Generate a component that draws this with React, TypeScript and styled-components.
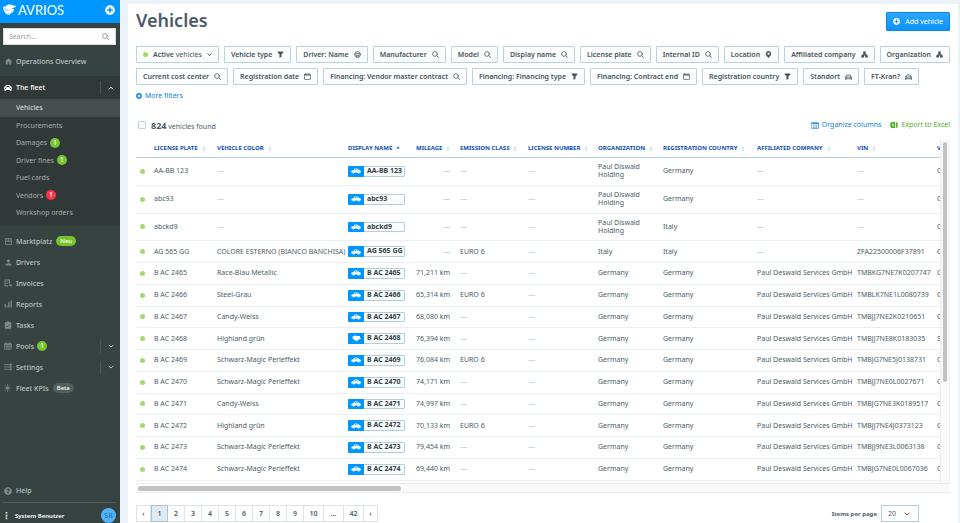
import React from 'react';
import styled, { createGlobalStyle } from 'styled-components';
import { FaCar, FaMapMarkerAlt, FaPlusCircle, FaQuestionCircle } from 'react-icons/fa';
import { MdHome, MdPerson, MdStorefront } from 'react-icons/md';

const Global = createGlobalStyle`
  *, *::before, *::after { box-sizing: border-box; }
  html, body { margin: 0; padding: 0; }
  body {
    font-family: "Noto Sans", "Open Sans", sans-serif;
    font-size: 7px;
    color: #4b5c67;
    background: #ecf3f8;
  }
  button, input, select { font: inherit; color: inherit; }
  a { color: inherit; text-decoration: none; }
  svg { display: block; flex: none; }
`;

/* ---------- icons ---------- */

const stroke = { fill: 'none', stroke: 'currentColor', strokeLinecap: 'round', strokeLinejoin: 'round' } as const;

const SearchIcon = ({ size = 7 }: { size?: number }) => (
  <svg width={size} height={size} viewBox="0 0 16 16" {...stroke} strokeWidth="1.8">
    <circle cx="6.8" cy="6.8" r="5.4" />
    <path d="M10.8 10.8 15 15" />
  </svg>
);
const FunnelIcon = () => (
  <svg width="7" height="7" viewBox="0 0 14 14" fill="currentColor">
    <path d="M1.500 1h11v2.500L9 6.500V12l-4 1.500v-7L1.500 3.500z" />
  </svg>
);
const WheelIcon = () => (
  <svg width="7" height="7" viewBox="0 0 16 16" {...stroke} strokeWidth="1.8">
    <circle cx="8" cy="8" r="6.6" />
    <path d="M2 7.500c4-2.500 8-2.500 12 0M5 10l3-1 3 1M6 11v3M10 11v3" />
  </svg>
);
const CalendarIcon = () => (
  <svg width="7" height="7" viewBox="0 0 14 14" {...stroke} strokeWidth="1.300">
    <rect x="1" y="2.500" width="12" height="10.500" rx="1" />
    <path d="M1.500 4h11" strokeWidth="1.800" />
    <path d="M4 .800v1.500M10 .800v1.500" />
  </svg>
);
const CompanyIcon = () => (
  <svg width="7" height="7" viewBox="0 0 14 14" fill="currentColor">
    <path d="M4.500 1h5v6h2.500v1.500h1.500v4.500H8V9H6v4H.5V8.500H2V7h2.500z" />
  </svg>
);
const CarFrontIcon = () => (
  <svg width="7" height="7" viewBox="1 0 14 14" {...stroke} strokeWidth="1.500">
    <path d="M3 7.500 4.500 4h7L13 7.500" />
    <path d="M1.800 8h12.400v3.500H1.800z" />
    <path d="M2.500 12v1M13.500 12v1M4 9.800h1M11 9.800h1" />
  </svg>
);
const Chevron = ({ up, size = 6 }: { up?: boolean; size?: number }) => (
  <svg width={size} height={size} viewBox="0 0 12 12" {...stroke} strokeWidth="2">
    <path d={up ? 'M2 8l4-3.500L10 8' : 'M2 4.500L6 8l4-3.500'} />
  </svg>
);
const InvoiceIcon = () => (
  <svg width="8" height="8" viewBox="0 0 16 16" fill="currentColor">
    <path d="M1 1h11v8h-2V3H3v10h5v2H1z" />
    <path d="M4.500 5h4v1.500h-4zM4.500 8h4v1.500h-4zM10 11h3V9l3 3.500-3 3.500v-2h-3z" />
  </svg>
);
const BarsIcon = () => (
  <svg width="8" height="8" viewBox="0 0 16 16" fill="currentColor">
    <path d="M1 8h2.500v7H1zM5 11h2v4H5zM8.500 4H11v11H8.500zM13 1h2.500v14H13z" />
  </svg>
);
const TasksIcon = () => (
  <svg width="8" height="8" viewBox="0 0 16 16">
    <path d="M1.500 2.500H5a3 2 0 0 1 6 0h3.500v13h-13z" fill="currentColor" />
    <path d="M4.500 9l2.500 2.500L11.500 7" fill="none" stroke="#364341" strokeWidth="1.800" />
  </svg>
);
const PoolsIcon = () => (
  <svg width="8" height="8" viewBox="0 0 16 16" {...stroke} strokeWidth="1.500">
    <rect x="1.500" y="3" width="13" height="11.500" />
    <path d="M1.500 5.500h13" strokeWidth="2.500" />
    <path d="M1.500 10h13M5.800 6v8M10.200 6v8M4 1v2M12 1v2" />
  </svg>
);
const SettingsIcon = () => (
  <svg width="8" height="8" viewBox="0 0 16 16" {...stroke} strokeWidth="1.500">
    <path d="M0.800 3.500h9M0.800 8h7M0.800 12.500h9M13.500 1v14" />
    <path d="M11.500 3.500h4M9.500 8h5M11.500 12.500h4" strokeWidth="2.400" />
  </svg>
);
const SparkIcon = () => (
  <svg width="7" height="8" viewBox="0 0 14 16" {...stroke} strokeWidth="1.300">
    <circle cx="7" cy="8" r="2.300" fill="currentColor" />
    <path d="M7 1v3M7 12v3M1 8h2M11 8h2M2.500 3l2 2M11.500 3l-2 2M2.500 13l2-2M11.500 13l-2-2" />
  </svg>
);
const ColumnsIcon = () => (
  <svg width="8" height="7" viewBox="0 0 16 14" {...stroke} strokeWidth="1.400">
    <path d="M1 1.500h14v11H1zM5.700 1.500v11M10.300 1.500v11M1 3h14" />
  </svg>
);
const ExcelIcon = () => (
  <svg width="8" height="8" viewBox="0 0 16 16">
    <path d="M4 2h6v12H4a3.500 3.500 0 0 1-3.500-3.500v-5A3.500 3.500 0 0 1 4 2z" fill="#4caf22" />
    <path d="M11.500 2.500h3.500v11h-3.500z" fill="#4caf22" />
    <path d="M6 5v6" stroke="#fff" strokeWidth="2" />
  </svg>
);
const CarSideIcon = () => (
  <svg width="10" height="6" viewBox="0 0 30 18" fill="currentColor">
    <path d="M1 8l6-1 3-4c1-1 2-1.500 4-1.500h3c2 0 3 .5 5 2l4 3.500c2 .3 3.500 1.500 3.500 3.500v3H26a3 3 0 0 1-6 0h-9a3 3 0 0 1-6 0H1z" />
    <path d="M10.500 7l2-3H15v3zM16.500 4c2 0 3 .5 5 3h-5z" fill="#0096ff" />
  </svg>
);
const VanIcon = () => (
  <svg width="9" height="7" viewBox="0 0 27 21" fill="currentColor">
    <path d="M2 4h4V2h9v1h9v4l1 1v5h-5v2h-3v3h-7v-3H6v-3H2z" />
  </svg>
);
const SortIcon = ({ active }: { active?: boolean }) => (
  <svg width="4" height="6" viewBox="0 0 8 12">
    <path d="M0.500 5 4 1l3.500 4z" fill={active ? '#0b4fb3' : '#c9dbe4'} />
    {!active && <path d="M0.500 7 4 11l3.500-4z" fill="#c9dbe4" />}
  </svg>
);
const BirdLogo = () => (
  <svg width="14" height="12" viewBox="0 0 42 36" fill="#fff">
    <path d="M1 7c3 2 5 1 8-1 6-5 15-6 22-1 3-1 6 0 9 3-4 0-6 2-7 4-2-1-5-1-7 1 3 1 5 2 7 2 0 6-4 11-11 13-9 2-17-1-19-8C1 17 0 12 1 7z" />
    <path d="M5 22c5 7 12 9 20 6-6 8-18 5-20-6z" />
    <path d="M3 12c4 4 9 5 13 4M5 18c5 3 10 3 14 1" fill="none" stroke="#4db5ff" strokeWidth="1.500" />
  </svg>
);
const DotsIcon = () => (
  <svg width="3" height="9" viewBox="0 0 3 9" fill="#fff">
    <path d="M.7 1h1.600v1.600H.7zM.7 3.800h1.600v1.600H.7zM.7 6.600h1.600v1.600H.7z" />
  </svg>
);

/* ---------- shell ---------- */

const Shell = styled.div`
  display: grid;
  grid-template-columns: 120px minmax(0, 1fr);
  grid-template-rows: minmax(0, 1fr);
  height: 100vh;
  overflow: hidden;
`;
const Sidebar = styled.aside`
  display: flex;
  flex-direction: column;
  min-height: 0;
  background: #364341;
  color: #c0c8c6;
`;
const Brand = styled.header`
  display: flex;
  align-items: center;
  justify-content: space-between;
  height: 23px;
  flex: none;
  padding: 0 5px 3px 3px;
  background: #0096ff;
  color: #fff;
`;
const Logo = styled.a`
  display: flex;
  align-items: center;
  gap: 1px;
  font: 400 13px/16px Lato, "Noto Sans", sans-serif;
  color: #fff;
`;
const IconButton = styled.button`
  display: flex;
  padding: 0;
  border: 0;
  background: none;
  color: inherit;
  font-size: 10px;
`;
const SearchBox = styled.label`
  display: flex;
  align-items: center;
  height: 17px;
  flex: none;
  margin: 5px 4px 6px 3px;
  padding: 0 6px 0 5px;
  background: #fff;
  border: 1px solid #d5dde0;
  color: #7d8b90;
`;
const SearchInput = styled.input`
  flex: 1;
  min-width: 0;
  padding: 0;
  border: 0;
  outline: 0;
  background: none;
  font-size: 7px;
  &::placeholder { color: #929ea3; opacity: 1; }
`;
const NavRow = styled.div<{ $bright?: boolean }>`
  display: flex;
  align-items: center;
  line-height: 3;
  padding-left: 4px;
  font-weight: 500;
  color: ${p => (p.$bright ? '#fff' : '#bcc4c2')};
`;
const NavLink = styled.a`
  display: flex;
  align-items: center;
  flex: 1;
`;
const NavIcon = styled.span<{ $bright?: boolean }>`
  display: flex;
  width: 12px;
  flex: none;
  font-size: 9px;
  color: ${p => (p.$bright ? '#fff' : '#808b88')};
`;
const Toggle = styled.button`
  display: flex;
  align-items: center;
  justify-content: center;
  width: 20px;
  height: 13px;
  padding: 0;
  border: 0;
  border-left: 1px solid #4b5755;
  background: none;
  color: inherit;
`;
const Section = styled.section`
  padding: 1px 0 4px;
  margin: 4px 0 5px;
  background: #313938;
`;
const SubList = styled.ul`
  list-style: none;
  margin: 1px 0 0;
  padding: 0;
`;
const SubItem = styled.li<{ $active?: boolean }>`
  line-height: 2.5;
  padding-left: 16px;
  background: ${p => (p.$active ? '#464e4d' : 'none')};
  color: ${p => (p.$active ? '#dfe3e2' : '#a5adab')};
`;
const SubLink = styled.a`
  display: flex;
  align-items: center;
`;
const Badge = styled.span<{ $tone: 'green' | 'red' | 'grey'; $pill?: boolean }>`
  min-width: 10px;
  height: 10px;
  padding: 0 ${p => (p.$pill ? 4 : 0)}px;
  margin-left: ${p => (p.$pill ? 4 : 3)}px;
  border-radius: 5px;
  font-size: ${p => (p.$pill ? 6 : 7)}px;
  line-height: 10px;
  text-align: center;
  font-weight: 500;
  color: #fff;
  background: ${p => ({ green: '#77c52d', red: '#fb3545', grey: '#525e5c' })[p.$tone]};
`;
const Footer = styled.footer`
  margin-top: auto;
  flex: none;
`;
const UserRow = styled.div`
  display: flex;
  align-items: center;
  gap: 7px;
  margin: 1px 4px 0 3px;
  padding: 5px 0 0 2px;
  border-top: 1px solid #505b59;
  font-size: 6px;
  font-weight: 600;
  color: #fff;
`;
const Avatar = styled.span`
  margin-left: auto;
  width: 15px;
  height: 15px;
  border-radius: 50%;
  background: #53b5ff;
  color: #1468ad;
  font-size: 7px;
  font-weight: 400;
  line-height: 15px;
  text-align: center;
`;

/* ---------- content ---------- */

const Panel = styled.main`
  display: flex;
  flex-direction: column;
  align-items: stretch;
  min-width: 0;
  margin: 4px 2px 0 8px;
  padding: 7px 8px 0;
  background: #fff;
`;
const TitleRow = styled.div`
  display: flex;
  align-items: center;
  justify-content: space-between;
  height: 20px;
`;
const Title = styled.h1`
  margin: 0;
  font-size: 18px;
  line-height: 18px;
  padding-bottom: 2px;
  font-weight: 600;
  color: #4b5c67;
`;
const AddButton = styled.button`
  display: flex;
  align-items: center;
  gap: 5px;
  height: 19px;
  padding: 0 6px;
  border: 1px solid #0a88e6;
  border-radius: 1px;
  background: linear-gradient(#2ea6ff, #0c93fb);
  color: #fff;
`;
const Filters = styled.div`
  display: flex;
  flex-wrap: wrap;
  gap: 5px;
  margin: 15px -4px 0 0;
`;
const Chip = styled.button`
  display: flex;
  align-items: center;
  gap: 5px;
  height: 17px;
  padding: 0 6px;
  border: 1px solid #b9d2de;
  border-radius: 1px;
  background: linear-gradient(#fff, #f9fbfc);
  color: #46555e;
  font-weight: 600;
  white-space: nowrap;
`;
const Light = styled.span`
  font-weight: 400;
`;
const Dot = styled.span`
  display: block;
  width: 5px;
  height: 5px;
  border-radius: 50%;
  background: #a3da6c;
`;
const LinkButton = styled.button<{ $tone?: 'green' }>`
  display: flex;
  align-items: center;
  gap: 3px;
  padding: 0;
  border: 0;
  background: none;
  line-height: 10px;
  color: ${p => (p.$tone === 'green' ? '#4caf22' : '#0a7fe0')};
`;
const MoreRow = styled.div`
  display: flex;
  margin-top: 6px;
`;
const ResultBar = styled.div`
  display: flex;
  align-items: center;
  gap: 9px;
  height: 14px;
  margin: 17px 0 8px;
`;
const SelectAll = styled.label`
  display: flex;
  align-items: center;
  gap: 5px;
  margin-right: auto;
  padding-left: 2px;
`;
const Checkbox = styled.input`
  appearance: none;
  width: 8px;
  height: 8px;
  margin: 0;
  border: 1px solid #b9d2de;
  border-radius: 1px;
  background: #fff;
`;
const Count = styled.strong`
  font-size: 9px;
  font-weight: 700;
`;

/* ---------- table ---------- */

const TableFrame = styled.div`
  display: grid;
  grid-template-columns: minmax(0, 1fr) 10px;
  grid-template-rows: 343px 10px;
`;
const TableScroll = styled.div`
  overflow: hidden;
`;
const TrackY = styled.div`
  padding: 2px 2px 0;
  background: #fafafa;
  border-left: 1px solid #ebebeb;
  border-right: 1px solid #f0f0f0;
`;
const TrackX = styled.div`
  grid-column: 1 / -1;
  padding: 2px;
  background: #fafafa;
  border-top: 1px solid #ebebeb;
  border-bottom: 1px solid #ebebeb;
`;
const Thumb = styled.div<{ $axis: 'x' | 'y' }>`
  border-radius: 3px;
  background: #c1c1c1;
  width: ${p => (p.$axis === 'x' ? '32.5%' : 'auto')};
  height: ${p => (p.$axis === 'y' ? '70.5%' : '5px')};
`;
const Table = styled.table`
  table-layout: fixed;
  width: 896px;
  border-collapse: separate;
  border-spacing: 0;
  line-height: 1.2;
`;
const Col = styled.col<{ $w: number }>`
  width: ${p => p.$w}px;
`;
const Th = styled.th`
  height: 18px;
  padding: 0 5px;
  border-bottom: 1px solid #b3cedb;
  text-align: left;
  font-size: 6px;
  font-weight: 700;
  color: #0b4fb3;
  white-space: nowrap;
`;
const SortButton = styled.button`
  display: flex;
  align-items: center;
  gap: 4px;
  padding: 0;
  border: 0;
  background: none;
`;
const Td = styled.td<{ $right?: boolean; $wrap?: boolean }>`
  padding: 5px;
  border-bottom: 1px solid #e6eff4;
  text-align: ${p => (p.$right ? 'right' : 'left')};
  white-space: ${p => (p.$wrap ? 'normal' : 'nowrap')};
`;
const StatusTd = styled(Td)`
  padding: 4px;
`;
const Dash = styled.span`
  color: #a9c5d3;
`;
const Tag = styled.a`
  display: flex;
  width: 57px;
  border: 1px solid #b3cedb;
  border-radius: 1px;
  background: linear-gradient(#fff, #f7fafc);
  line-height: 1.25;
  font-weight: 700;
  color: #333f46;
`;
const TagIcon = styled.span`
  display: flex;
  align-items: center;
  justify-content: center;
  width: 16px;
  margin: -1px 3px -1px -1px;
  border-radius: 1px 0 0 1px;
  background: #0096ff;
  color: #fff;
`;

/* ---------- pager ---------- */

const PagerRow = styled.div`
  display: flex;
  align-items: flex-start;
  justify-content: space-between;
  margin-top: 12px;
`;
const Pager = styled.nav`
  display: flex;
  border-left: 1px solid #dde4e8;
`;
const PageButton = styled.button<{ $current?: boolean; $wide?: boolean }>`
  min-width: ${p => (p.$wide ? 20 : 17)}px;
  height: 17px;
  padding: 0;
  border: 1px solid ${p => (p.$current ? '#a9c5d8' : '#dde4e8')};
  border-left-width: ${p => (p.$current ? 1 : 0)}px;
  background: ${p => (p.$current ? '#dfeaf3' : '#fff')};
  font-weight: 600;
`;
const PageArrow = styled(PageButton)`
  min-width: 14px;
`;
const PageSize = styled.label`
  display: flex;
  align-items: center;
  gap: 4px;
  margin-right: 31px;
  font-size: 6px;
  font-weight: 700;
`;
const SelectWrap = styled.span`
  display: grid;
  align-items: center;
  grid-template-columns: 1fr 14px;
  width: 38px;
  height: 17px;
  border: 1px solid #b3cedb;
`;
const Select = styled.select`
  grid-area: 1 / 1 / 2 / 3;
  appearance: none;
  height: 15px;
  padding: 0 6px;
  border: 0;
  background: none;
  font-size: 7px;
  font-weight: 400;
`;
const SelectArrow = styled.span`
  grid-area: 1 / 2 / 2 / 3;
  pointer-events: none;
`;

/* ---------- data ---------- */

type Kind = 'car' | 'van';
type Vehicle = { plate: string; color?: string; km?: string; euro?: string; org: string; country: string; company?: string; vin?: string; kind?: Kind };
const services = 'Paul Deswald Services GmbH';
const de = { org: 'Germany', country: 'Germany', company: services };

const vehicles: Vehicle[] = [
  { plate: 'AA-BB 123', org: 'Paul Diswald Holding', country: 'Germany' },
  { plate: 'abc93', org: 'Paul Diswald Holding', country: 'Germany' },
  { plate: 'abckd9', org: 'Paul Diswald Holding', country: 'Italy' },
  { plate: 'AG 565 GG', color: 'COLORE ESTERNO (BIANCO BANCHISA)', euro: 'EURO 6', org: 'Italy', country: 'Italy', vin: 'ZFA22500006F37891' },
  { plate: 'B AC 2465', color: 'Race-Blau Metallic', km: '71,211 km', ...de, vin: 'TMBKG7NE7K0207747' },
  { plate: 'B AC 2466', color: 'Steel-Grau', km: '65,314 km', euro: 'EURO 6', ...de, vin: 'TMBLK7NE1L0080739' },
  { plate: 'B AC 2467', color: 'Candy-Weiss', km: '68,080 km', ...de, vin: 'TMBJJ7NE2K0210651' },
  { plate: 'B AC 2468', color: 'Highland grün', km: '76,394 km', ...de, vin: 'TMBJJ7NE8K0183035', kind: 'van' },
  { plate: 'B AC 2469', color: 'Schwarz-Magic Perleffekt', km: '76,084 km', euro: 'EURO 6', ...de, vin: 'TMBJG7NE5J0138731' },
  { plate: 'B AC 2470', color: 'Schwarz-Magic Perleffekt', km: '74,171 km', ...de, vin: 'TMBJJ7NE0L0027671' },
  { plate: 'B AC 2471', color: 'Candy-Weiss', km: '74,997 km', ...de, vin: 'TMBJG7NE3K0189517' },
  { plate: 'B AC 2472', color: 'Highland grün', km: '70,133 km', euro: 'EURO 6', ...de, vin: 'TMBJJ7NE4J0373123' },
  { plate: 'B AC 2473', color: 'Schwarz-Magic Perleffekt', km: '79,454 km', ...de, vin: 'TMBJJ9NE3L0063138' },
  { plate: 'B AC 2474', color: 'Schwarz-Magic Perleffekt', km: '69,440 km', ...de, vin: 'TMBJG7NE0L0067036' },
];

const columns: [string, number][] = [
  ['LICENSE PLATE', 63], ['VEHICLE COLOR', 131], ['DISPLAY NAME', 68], ['MILEAGE', 44],
  ['EMISSION CLASS', 68], ['LICENSE NUMBER', 70], ['ORGANIZATION', 65], ['REGISTRATION COUNTRY', 94],
  ['AFFILIATED COMPANY', 100], ['VIN', 80], ['VEHICLE TYPE', 100],
];

const filters: [string, React.ReactNode][] = [
  ['Vehicle type', <FunnelIcon />], ['Driver: Name', <WheelIcon />], ['Manufacturer', <SearchIcon />],
  ['Model', <SearchIcon />], ['Display name', <SearchIcon />], ['License plate', <SearchIcon />],
  ['Internal ID', <SearchIcon />], ['Location', <FaMapMarkerAlt />], ['Affiliated company', <CompanyIcon />],
  ['Organization', <CompanyIcon />], ['Current cost center', <SearchIcon />], ['Registration date', <CalendarIcon />],
  ['Financing: Vendor master contract', <SearchIcon />], ['Financing: Financing type', <FunnelIcon />],
  ['Financing: Contract end', <CalendarIcon />], ['Registration country', <FunnelIcon />],
  ['Standort', <CarFrontIcon />], ['FT-Kran?', <CarFrontIcon />],
];

const fleetItems: { label: string; badge?: string; tone?: 'green' | 'red' }[] = [
  { label: 'Vehicles' }, { label: 'Procurements' }, { label: 'Damages', badge: '1', tone: 'green' },
  { label: 'Driver fines', badge: '1', tone: 'green' }, { label: 'Fuel cards' },
  { label: 'Vendors', badge: '1', tone: 'red' }, { label: 'Workshop orders' },
];

type NavEntry = { label: string; icon: React.ReactNode; badge?: string; tone?: 'green' | 'grey'; pill?: boolean; expandable?: boolean };
const navItems: NavEntry[] = [
  { label: 'Marktplatz', icon: <MdStorefront />, badge: 'Neu', tone: 'green', pill: true },
  { label: 'Drivers', icon: <MdPerson /> },
  { label: 'Invoices', icon: <InvoiceIcon /> },
  { label: 'Reports', icon: <BarsIcon /> },
  { label: 'Tasks', icon: <TasksIcon /> },
  { label: 'Pools', icon: <PoolsIcon />, badge: '1', tone: 'green', expandable: true },
  { label: 'Settings', icon: <SettingsIcon />, expandable: true },
  { label: 'Fleet KPIs', icon: <SparkIcon />, badge: 'Beta', tone: 'grey', pill: true },
];

const Value = ({ text }: { text?: string }) => (text ? <>{text}</> : <Dash>—</Dash>);

/* ---------- page ---------- */

function SideNavigation() {
  return (
    <Sidebar>
      <Brand>
        <Logo href="#"><BirdLogo />AVRIOS</Logo>
        <IconButton aria-label="Create"><FaPlusCircle /></IconButton>
      </Brand>
      <SearchBox>
        <SearchInput placeholder="Search..." aria-label="Search" />
        <SearchIcon />
      </SearchBox>
      <NavRow>
        <NavLink href="#"><NavIcon><MdHome /></NavIcon>Operations Overview</NavLink>
      </NavRow>
      <Section>
        <NavRow $bright>
          <NavLink href="#"><NavIcon $bright><FaCar size={8} /></NavIcon>The fleet</NavLink>
          <Toggle aria-label="Collapse The fleet"><Chevron up /></Toggle>
        </NavRow>
        <SubList>
          {fleetItems.map((item, i) => (
            <SubItem key={item.label} $active={i === 0}>
              <SubLink href="#">
                {item.label}
                {item.badge && <Badge $tone={item.tone!}>{item.badge}</Badge>}
              </SubLink>
            </SubItem>
          ))}
        </SubList>
      </Section>
      {navItems.map(item => (
        <NavRow key={item.label}>
          <NavLink href="#">
            <NavIcon>{item.icon}</NavIcon>
            {item.label}
            {item.badge && <Badge $tone={item.tone!} $pill={item.pill}>{item.badge}</Badge>}
          </NavLink>
          {item.expandable && <Toggle aria-label={`Expand ${item.label}`}><Chevron /></Toggle>}
        </NavRow>
      ))}
      <Footer>
        <NavRow>
          <NavLink href="#"><NavIcon><FaQuestionCircle size={8} /></NavIcon>Help</NavLink>
        </NavRow>
        <UserRow><DotsIcon />System Benutzer<Avatar>SB</Avatar></UserRow>
      </Footer>
    </Sidebar>
  );
}

function VehicleTable() {
  return (
    <TableFrame>
      <TableScroll>
        <Table>
          <colgroup>
            <Col $w={13} />
            {columns.map(([name, w]) => <Col key={name} $w={w} />)}
          </colgroup>
          <thead>
            <tr>
              <Th aria-label="Status" />
              {columns.map(([name]) => (
                <Th key={name} scope="col">
                  <SortButton>{name}<SortIcon active={name === 'DISPLAY NAME'} /></SortButton>
                </Th>
              ))}
            </tr>
          </thead>
          <tbody>
            {vehicles.map(v => (
              <tr key={v.plate}>
                <StatusTd><Dot /></StatusTd>
                <Td>{v.plate}</Td>
                <Td><Value text={v.color} /></Td>
                <Td><Tag href="#"><TagIcon>{v.kind === 'van' ? <VanIcon /> : <CarSideIcon />}</TagIcon>{v.plate}</Tag></Td>
                <Td $right><Value text={v.km} /></Td>
                <Td><Value text={v.euro} /></Td>
                <Td><Value /></Td>
                <Td $wrap>{v.org}</Td>
                <Td>{v.country}</Td>
                <Td><Value text={v.company} /></Td>
                <Td><Value text={v.vin} /></Td>
                <Td>{v.kind === 'van' ? 'Special' : 'Car'}</Td>
              </tr>
            ))}
          </tbody>
        </Table>
      </TableScroll>
      <TrackY><Thumb $axis="y" /></TrackY>
      <TrackX><Thumb $axis="x" /></TrackX>
    </TableFrame>
  );
}

export default function App() {
  return (
    <>
      <Global />
      <Shell>
        <SideNavigation />
        <Panel>
          <TitleRow>
            <Title>Vehicles</Title>
            <AddButton><FaPlusCircle />Add vehicle</AddButton>
          </TitleRow>
          <Filters>
            <Chip><Dot /><span>Active <Light>vehicles</Light></span><Chevron size={5} /></Chip>
            {filters.map(([label, icon]) => <Chip key={label}>{label}{icon}</Chip>)}
          </Filters>
          <MoreRow><LinkButton><FaPlusCircle size={6} />More filters</LinkButton></MoreRow>
          <ResultBar>
            <SelectAll>
              <Checkbox type="checkbox" />
              <span><Count>824</Count> vehicles found</span>
            </SelectAll>
            <LinkButton><ColumnsIcon />Organize columns</LinkButton>
            <LinkButton $tone="green"><ExcelIcon />Export to Excel</LinkButton>
          </ResultBar>
          <VehicleTable />
          <PagerRow>
            <Pager aria-label="Pages">
              <PageArrow aria-label="Previous page">‹</PageArrow>
              {['1', '2', '3', '4', '5', '6', '7', '8', '9', '10', '...', '42'].map(p => (
                <PageButton key={p} $current={p === '1'} $wide={p.length > 1}>{p}</PageButton>
              ))}
              <PageArrow aria-label="Next page">›</PageArrow>
            </Pager>
            <PageSize>
              Items per page
              <SelectWrap>
                <Select defaultValue="20"><option>20</option><option>50</option></Select>
                <SelectArrow><Chevron /></SelectArrow>
              </SelectWrap>
            </PageSize>
          </PagerRow>
        </Panel>
      </Shell>
    </>
  );
}
